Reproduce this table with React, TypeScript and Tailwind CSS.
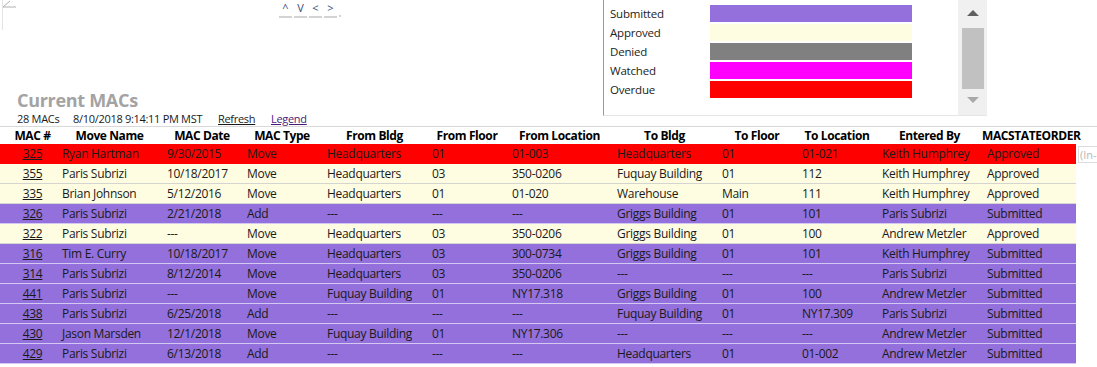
import React from 'react';

type Status = 'Approved' | 'Submitted';

interface MacRow {
  id: string;
  name: string;
  date: string;
  type: string;
  fromBldg: string;
  fromFloor: string;
  fromLoc: string;
  toBldg: string;
  toFloor: string;
  toLoc: string;
  enteredBy: string;
  state: Status;
  overdue?: boolean;
}

const rows: MacRow[] = [
  { id: '325', name: 'Ryan Hartman', date: '9/30/2015', type: 'Move', fromBldg: 'Headquarters', fromFloor: '01', fromLoc: '01-003', toBldg: 'Headquarters', toFloor: '01', toLoc: '01-021', enteredBy: 'Keith Humphrey', state: 'Approved', overdue: true },
  { id: '355', name: 'Paris Subrizi', date: '10/18/2017', type: 'Move', fromBldg: 'Headquarters', fromFloor: '03', fromLoc: '350-0206', toBldg: 'Fuquay Building', toFloor: '01', toLoc: '112', enteredBy: 'Keith Humphrey', state: 'Approved' },
  { id: '335', name: 'Brian Johnson', date: '5/12/2016', type: 'Move', fromBldg: 'Headquarters', fromFloor: '01', fromLoc: '01-020', toBldg: 'Warehouse', toFloor: 'Main', toLoc: '111', enteredBy: 'Keith Humphrey', state: 'Approved' },
  { id: '326', name: 'Paris Subrizi', date: '2/21/2018', type: 'Add', fromBldg: '---', fromFloor: '---', fromLoc: '---', toBldg: 'Griggs Building', toFloor: '01', toLoc: '101', enteredBy: 'Paris Subrizi', state: 'Submitted' },
  { id: '322', name: 'Paris Subrizi', date: '---', type: 'Move', fromBldg: 'Headquarters', fromFloor: '03', fromLoc: '350-0206', toBldg: 'Griggs Building', toFloor: '01', toLoc: '100', enteredBy: 'Andrew Metzler', state: 'Approved' },
  { id: '316', name: 'Tim E. Curry', date: '10/18/2017', type: 'Move', fromBldg: 'Headquarters', fromFloor: '03', fromLoc: '300-0734', toBldg: 'Griggs Building', toFloor: '01', toLoc: '101', enteredBy: 'Keith Humphrey', state: 'Submitted' },
  { id: '314', name: 'Paris Subrizi', date: '8/12/2014', type: 'Move', fromBldg: 'Headquarters', fromFloor: '03', fromLoc: '350-0206', toBldg: '---', toFloor: '---', toLoc: '---', enteredBy: 'Paris Subrizi', state: 'Submitted' },
  { id: '441', name: 'Paris Subrizi', date: '---', type: 'Move', fromBldg: 'Fuquay Building', fromFloor: '01', fromLoc: 'NY17.318', toBldg: 'Griggs Building', toFloor: '01', toLoc: '100', enteredBy: 'Andrew Metzler', state: 'Submitted' },
  { id: '438', name: 'Paris Subrizi', date: '6/25/2018', type: 'Add', fromBldg: '---', fromFloor: '---', fromLoc: '---', toBldg: 'Fuquay Building', toFloor: '01', toLoc: 'NY17.309', enteredBy: 'Paris Subrizi', state: 'Submitted' },
  { id: '430', name: 'Jason Marsden', date: '12/1/2018', type: 'Move', fromBldg: 'Fuquay Building', fromFloor: '01', fromLoc: 'NY17.306', toBldg: '---', toFloor: '---', toLoc: '---', enteredBy: 'Andrew Metzler', state: 'Submitted' },
  { id: '429', name: 'Paris Subrizi', date: '6/13/2018', type: 'Add', fromBldg: '---', fromFloor: '---', fromLoc: '---', toBldg: 'Headquarters', toFloor: '01', toLoc: '01-002', enteredBy: 'Andrew Metzler', state: 'Submitted' },
];

// column widths, in px, matched to the grid
const cols: { label: string; w: string }[] = [
  { label: 'MAC #', w: 'w-[57px]' },
  { label: 'Move Name', w: 'w-[105px]' },
  { label: 'MAC Date', w: 'w-[80px]' },
  { label: 'MAC Type', w: 'w-[80px]' },
  { label: 'From Bldg', w: 'w-[105px]' },
  { label: 'From Floor', w: 'w-[80px]' },
  { label: 'From Location', w: 'w-[105px]' },
  { label: 'To Bldg', w: 'w-[105px]' },
  { label: 'To Floor', w: 'w-[80px]' },
  { label: 'To Location', w: 'w-[80px]' },
  { label: 'Entered By', w: 'w-[105px]' },
  { label: 'MACSTATEORDER', w: 'w-[94px]' },
];

const legend = [
  { label: 'Submitted', color: 'bg-[#9370db]' },
  { label: 'Approved', color: 'bg-[#fffde1]' },
  { label: 'Denied', color: 'bg-[#808080]' },
  { label: 'Watched', color: 'bg-[#ff00ff]' },
  { label: 'Overdue', color: 'bg-[#ff0000]' },
];

function rowColor(r: MacRow) {
  if (r.overdue) return 'bg-[#ff0000] border-[#ff0000]';
  if (r.state === 'Approved') return 'bg-[#fffde1] border-[#d4d4d0]';
  return 'bg-[#9370db] border-[#d3c8f2]';
}

function Cell({ w, children }: { w: string; children: React.ReactNode }) {
  return <div className={`${w} shrink-0 pl-[5px] truncate`}>{children}</div>;
}

export default function App() {
  return (
    <div className="w-[1097px] h-[367px] overflow-hidden bg-white text-[#1a1a1a] font-['Open_Sans',sans-serif]">
      {/* Top area */}
      <div className="relative flex h-[127px] border-b border-[#d8d8d8]">
        {/* corner resize mark */}
        <div className="absolute left-[2px] top-0 h-[30px] w-px bg-[#e4e4e4]" />
        <svg className="absolute left-[2px] top-0" width="14" height="8" viewBox="0 0 14 8">
          <path d="M1 7 L8 1 M1 7 H14" stroke="#b0b0b0" strokeWidth="1" fill="none" />
        </svg>

        <div className="flex w-[603px] flex-col">
          {/* nav arrows */}
          <div className="ml-[279px] mt-[1px] flex items-start gap-[2px] text-[11px] leading-[14px]">
            {['^', 'V', '<', '>'].map((a) => (
              <span key={a} className="w-[13px] border-b-2 border-[#d4d4d4] pb-[1px] text-center text-[#3b4a7a]">
                {a}
              </span>
            ))}
            <span className="mt-[14px] h-[2px] w-[2px] bg-[#d4d4d4]" />
          </div>

          <div className="mt-auto pl-[17px]">
            <div className="text-[18px] font-bold leading-[22px] tracking-[-0.3px] text-[#a3a3a3]">Current MACs</div>
            <div className="flex h-[15px] items-center text-[11px] leading-[15px] tracking-[-0.3px]">
              <span className="w-[56px]">28 MACs</span>
              <span className="w-[145px]">8/10/2018 9:14:11 PM MST</span>
              <span className="w-[53px] underline">Refresh</span>
              <span className="text-[#4a1a7a] underline">Legend</span>
            </div>
          </div>
        </div>

        {/* Legend box */}
        <div className="flex h-[116px] w-[384px] border-b border-l border-[#9a9a9a] border-b-[#e6e6e6]">
          <div className="flex flex-1 flex-col gap-[2px] pl-[6px] pt-[5px]">
            {legend.map((l) => (
              <div key={l.label} className="flex h-[17px] items-center">
                <span className="w-[100px] text-[11.5px] tracking-[-0.2px] text-[#222]">{l.label}</span>
                <span className={`h-[17px] w-[202px] ${l.color}`} />
              </div>
            ))}
          </div>
          <div className="flex w-[29px] flex-col items-center bg-[#f0f0f0] pb-[12px]">
            <svg className="mt-[10px]" width="12" height="6" viewBox="0 0 12 6">
              <path d="M0 6 L6 0 L12 6 Z" fill="#606060" />
            </svg>
            <div className="mt-[12px] h-[62px] w-[22px] bg-[#c1c1c1]" />
            <svg className="mt-[8px]" width="12" height="6" viewBox="0 0 12 6">
              <path d="M0 0 L6 6 L12 0 Z" fill="#a8a8a8" />
            </svg>
          </div>
        </div>
      </div>

      {/* Header */}
      <div className="flex h-[17px] items-center text-[12px] font-bold leading-[16px] tracking-[-0.4px] text-black">
        {cols.map((c, i) => (
          <div key={c.label} className={`${c.w} shrink-0 text-center ${i === 0 ? 'pl-[8px]' : ''}`}>
            {c.label}
          </div>
        ))}
      </div>

      {/* Rows */}
      <div className="flex flex-col">
        {rows.map((r, idx) => (
          <div key={r.id} className="flex items-center">
            <div className={`flex h-[20px] w-[1076px] items-center border-b text-[12px] leading-[19px] tracking-[-0.3px] ${rowColor(r)}`}>
              <div className="w-[57px] shrink-0 pl-[8px] text-center">
                <span className="underline">{r.id}</span>
              </div>
              <Cell w="w-[105px]">{r.name}</Cell>
              <Cell w="w-[80px]">{r.date}</Cell>
              <Cell w="w-[80px]">{r.type}</Cell>
              <Cell w="w-[105px]">{r.fromBldg}</Cell>
              <Cell w="w-[80px]">{r.fromFloor}</Cell>
              <Cell w="w-[105px]">{r.fromLoc}</Cell>
              <Cell w="w-[105px]">{r.toBldg}</Cell>
              <Cell w="w-[80px]">{r.toFloor}</Cell>
              <Cell w="w-[80px]">{r.toLoc}</Cell>
              <Cell w="w-[105px]">{r.enteredBy}</Cell>
              <Cell w="w-[94px]">{r.state}</Cell>
            </div>
            {idx === 0 && (
              <div className="ml-[2px] h-[17px] w-[40px] shrink-0 overflow-hidden whitespace-nowrap border border-[#dcdcdc] pl-[1px] text-[11px] leading-[15px] text-[#b8b8b8]">
                (In-Compliance)
              </div>
            )}
          </div>
        ))}
      </div>
    </div>
  );
}
